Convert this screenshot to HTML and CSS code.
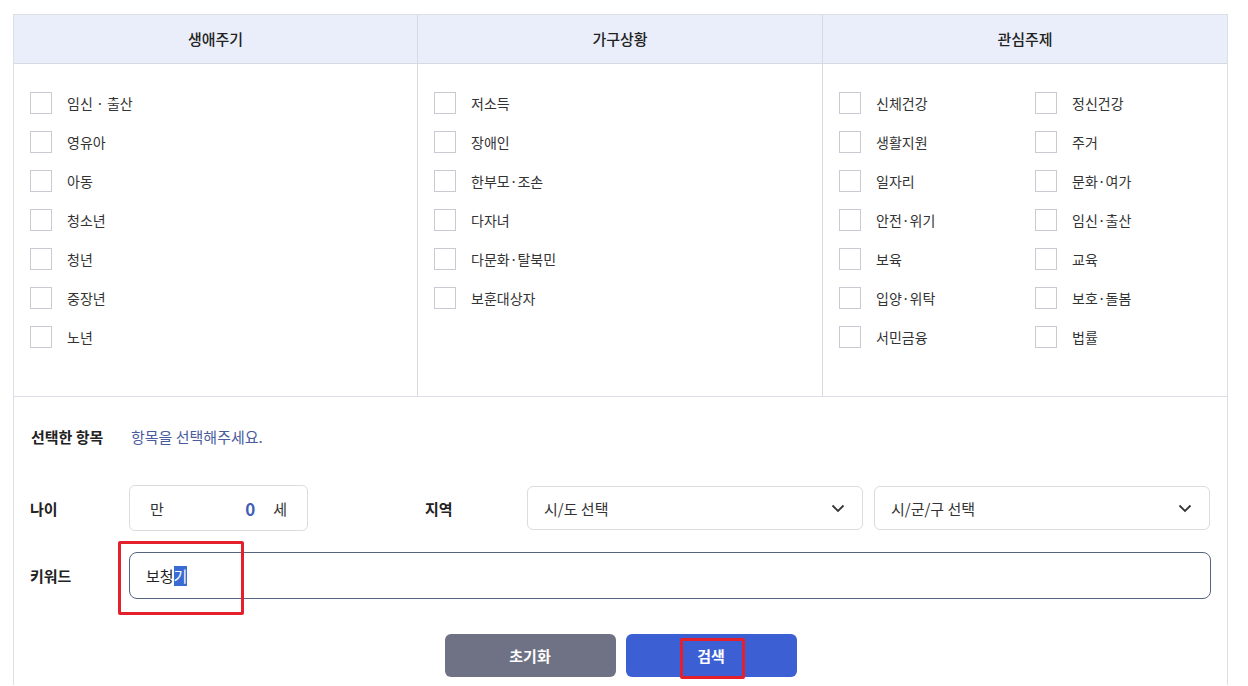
FILE: index.html
```html
<!DOCTYPE html>
<html>
<head>
  <link rel="stylesheet" href="styles.css">
</head>
<body>
  <div class="page">
    <div class="filter-box">
      <div class="category-grid">
        <div class="category-head">생애주기</div>
        <div class="category-head">가구상황</div>
        <div class="category-head">관심주제</div>

        <div class="category-body">
          <label class="check"><span class="box"></span>임신 · 출산</label>
          <label class="check"><span class="box"></span>영유아</label>
          <label class="check"><span class="box"></span>아동</label>
          <label class="check"><span class="box"></span>청소년</label>
          <label class="check"><span class="box"></span>청년</label>
          <label class="check"><span class="box"></span>중장년</label>
          <label class="check"><span class="box"></span>노년</label>
        </div>
        <div class="category-body">
          <label class="check"><span class="box"></span>저소득</label>
          <label class="check"><span class="box"></span>장애인</label>
          <label class="check"><span class="box"></span>한부모·조손</label>
          <label class="check"><span class="box"></span>다자녀</label>
          <label class="check"><span class="box"></span>다문화·탈북민</label>
          <label class="check"><span class="box"></span>보훈대상자</label>
        </div>
        <div class="category-body two-col">
          <label class="check"><span class="box"></span>신체건강</label>
          <label class="check"><span class="box"></span>정신건강</label>
          <label class="check"><span class="box"></span>생활지원</label>
          <label class="check"><span class="box"></span>주거</label>
          <label class="check"><span class="box"></span>일자리</label>
          <label class="check"><span class="box"></span>문화·여가</label>
          <label class="check"><span class="box"></span>안전·위기</label>
          <label class="check"><span class="box"></span>임신·출산</label>
          <label class="check"><span class="box"></span>보육</label>
          <label class="check"><span class="box"></span>교육</label>
          <label class="check"><span class="box"></span>입양·위탁</label>
          <label class="check"><span class="box"></span>보호·돌봄</label>
          <label class="check"><span class="box"></span>서민금융</label>
          <label class="check"><span class="box"></span>법률</label>
        </div>
      </div>

      <div class="search-area">
        <div class="search-row selected-row">
          <span class="row-label">선택한 항목</span>
          <span class="selected-text">항목을 선택해주세요.</span>
        </div>

        <div class="search-row age-row">
          <span class="row-label">나이</span>
          <div class="age-box">
            <span>만</span>
            <span class="age-value">0</span>
            <span class="age-unit">세</span>
          </div>
          <span class="row-label region-label">지역</span>
          <div class="selects">
            <div class="select">
              <span>시/도 선택</span>
              <svg width="14" height="9" viewBox="0 0 14 9"><path d="M1.5 1.5 L7 7 L12.5 1.5" fill="none" stroke="#333" stroke-width="1.8"/></svg>
            </div>
            <div class="select">
              <span>시/군/구 선택</span>
              <svg width="14" height="9" viewBox="0 0 14 9"><path d="M1.5 1.5 L7 7 L12.5 1.5" fill="none" stroke="#333" stroke-width="1.8"/></svg>
            </div>
          </div>
        </div>

        <div class="search-row keyword-row">
          <span class="row-label">키워드</span>
          <div class="keyword-input">보청<span class="sel">기</span></div>
        </div>

        <div class="buttons">
          <button type="button" class="btn btn-reset">초기화</button>
          <button type="button" class="btn btn-search">검색</button>
        </div>
      </div>
    </div>

    <div class="mark mark-keyword"></div>
    <div class="mark mark-search"></div>
  </div>
</body>
</html>
```

FILE: styles.css
```css
body {
  margin: 0;
  font-family: "Noto Sans CJK KR", "Noto Sans", sans-serif;
  color: #333;
  background-color: #fff;
}

.page {
  position: relative;
  padding: 14px 20px 0 13px;
}

.filter-box {
  width: 1213px;
  border: 1px solid #dcdfe5;
  border-bottom: none;
}

.category-grid {
  display: grid;
  grid-template-columns: 403px 405px minmax(0, 1fr);
  border-bottom: 1px solid #dcdfe5;
}

.category-head {
  height: 48px;
  line-height: 48px;
  text-align: center;
  font-size: 15px;
  font-weight: 500;
  color: #222;
  background-color: #eaeefa;
  border-bottom: 1px solid #d6d9e0;
}

.category-head + .category-head,
.category-body + .category-body {
  border-left: 1px solid #d6d9e0;
}

.category-body {
  height: 332px;
  box-sizing: border-box;
  padding: 28px 16px 0 16px;
  display: flex;
  flex-direction: column;
  gap: 17px;
}

.category-body.two-col {
  display: grid;
  grid-template-columns: 196px 196px;
  grid-auto-rows: 22px;
  row-gap: 17px;
  column-gap: 0;
  align-content: start;
}

.check {
  display: flex;
  align-items: center;
  height: 22px;
  font-size: 14px;
  color: #333;
}

.box {
  width: 20px;
  height: 20px;
  border: 1px solid #c8ccd2;
  background-color: #fff;
  margin-right: 15px;
  flex-shrink: 0;
}

.search-area {
  padding: 28px 16px 8px 16px;
}

.search-row {
  display: flex;
  align-items: center;
}

.row-label {
  width: 99px;
  flex-shrink: 0;
  font-size: 15px;
  font-weight: 700;
  color: #222;
}

.selected-row {
  height: 22px;
  padding-left: 1px;
}

.selected-text {
  font-size: 15px;
  color: #4a5c9e;
  padding-left: 1px;
}

.age-row {
  margin-top: 38px;
  height: 46px;
}

.age-box {
  width: 179px;
  height: 46px;
  box-sizing: border-box;
  border: 1px solid #dcdcdc;
  border-radius: 6px;
  display: flex;
  align-items: center;
  padding: 0 20px;
  font-size: 15px;
}

.age-value {
  margin-left: auto;
  font-size: 17px;
  font-weight: 700;
  color: #3f5fb8;
}

.age-unit {
  margin-left: 18px;
}

.region-label {
  margin-left: 117px;
  width: 102px;
}

.selects {
  display: flex;
  gap: 11px;
  width: 683px;
}

.select {
  flex: 1;
  height: 44px;
  box-sizing: border-box;
  border: 1px solid #dcdcdc;
  border-radius: 6px;
  display: flex;
  align-items: center;
  justify-content: space-between;
  padding: 0 17px 0 16px;
  font-size: 15px;
  color: #333;
}

.keyword-row {
  margin-top: 21px;
}

.keyword-input {
  flex: 1;
  height: 47px;
  box-sizing: border-box;
  border: 1px solid #55657f;
  border-radius: 8px;
  display: flex;
  align-items: center;
  padding-left: 16px;
  font-size: 15px;
  color: #222;
}

.sel {
  background-color: #3a6bd2;
  color: #fff;
  line-height: 20px;
}

.buttons {
  display: flex;
  justify-content: center;
  gap: 10px;
  margin-top: 35px;
}

.btn {
  width: 171px;
  height: 43px;
  border: none;
  border-radius: 6px;
  font-family: "Noto Sans CJK KR", "Noto Sans", sans-serif;
  font-size: 15px;
  font-weight: 700;
  color: #fff;
  cursor: pointer;
}

.btn-reset {
  background-color: #6f7284;
}

.btn-search {
  background-color: #3d5fd4;
}

.mark {
  position: absolute;
  border: 3px solid #e3202b;
  border-radius: 2px;
  box-sizing: border-box;
}

.mark-keyword {
  left: 118px;
  top: 541px;
  width: 126px;
  height: 74px;
}

.mark-search {
  left: 680px;
  top: 638px;
  width: 65px;
  height: 41px;
}
```
